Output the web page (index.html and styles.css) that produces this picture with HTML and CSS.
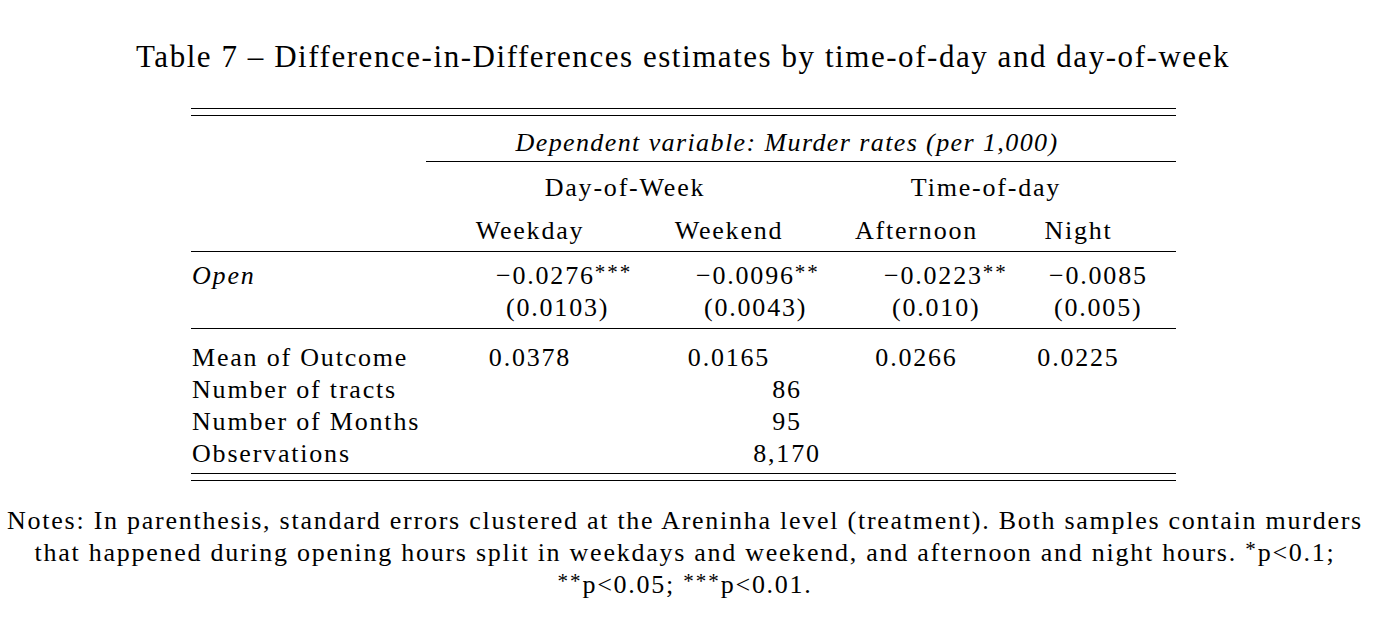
FILE: index.html
```html
<!DOCTYPE html>
<html>
<head>
<meta charset="utf-8">
<title>Table 7</title>
<link rel="stylesheet" href="styles.css">
</head>
<body>
<h1 class="title">Table 7 – Difference-in-Differences estimates by time-of-day and day-of-week</h1>
<div class="tbl">
  <div class="double-rule"></div>
  <div class="row dep-row">
    <div class="dep-cell">Dependent variable: Murder rates (per 1,000)</div>
  </div>
  <div class="row group-row">
    <div class="group-a">Day-of-Week</div>
    <div class="group-b">Time-of-day</div>
  </div>
  <div class="row head-row">
    <div class="label"></div>
    <div class="cell">Weekday</div>
    <div class="cell">Weekend</div>
    <div class="cell">Afternoon</div>
    <div class="cell">Night</div>
  </div>
  <div class="row coef-row">
    <div class="label"><i>Open</i></div>
    <div class="cell">−0.0276<sup>***</sup></div>
    <div class="cell">−0.0096<sup>**</sup></div>
    <div class="cell">−0.0223<sup>**</sup></div>
    <div class="cell">−0.0085</div>
  </div>
  <div class="row se-row">
    <div class="label"></div>
    <div class="cell">(0.0103)</div>
    <div class="cell">(0.0043)</div>
    <div class="cell">(0.010)</div>
    <div class="cell">(0.005)</div>
  </div>
  <div class="row mean-row">
    <div class="label">Mean of Outcome</div>
    <div class="cell">0.0378</div>
    <div class="cell">0.0165</div>
    <div class="cell">0.0266</div>
    <div class="cell">0.0225</div>
  </div>
  <div class="row stat-row">
    <div class="label">Number of tracts</div>
    <div class="span4">86</div>
  </div>
  <div class="row stat-row">
    <div class="label">Number of Months</div>
    <div class="span4">95</div>
  </div>
  <div class="row stat-row last">
    <div class="label">Observations</div>
    <div class="span4">8,170</div>
  </div>
  <div class="double-rule"></div>
</div>
<p class="notes">Notes: In parenthesis, standard errors clustered at the Areninha level (treatment). Both samples contain murders<br>that happened during opening hours split in weekdays and weekend, and afternoon and night hours. <sup>*</sup>p&lt;0.1;<br><sup>**</sup>p&lt;0.05; <sup>***</sup>p&lt;0.01.</p>
</body>
</html>
```
FILE: styles.css
```css
html, body {
  margin: 0;
  padding: 0;
  background: #ffffff;
  color: #000000;
}

body {
  font-family: "Liberation Serif", "Times New Roman", serif;
  font-size: 26px;
  letter-spacing: 1.8px;
  width: 1378px;
}

.title {
  margin: 0;
  padding: 37px 12px 0 0;
  font-size: 31px;
  font-weight: normal;
  line-height: 40px;
  text-align: center;
  letter-spacing: 1.55px;
  white-space: nowrap;
}

.tbl {
  width: 985px;
  margin: 31px 0 0 191px;
}

.double-rule {
  height: 6px;
  border-top: 1px solid #000;
  border-bottom: 1px solid #000;
}

.row {
  display: grid;
  grid-template-columns: 235px 208px 190px 185px 139px 28px;
  line-height: 32px;
  white-space: nowrap;
}

.label {
  grid-column: 1;
  padding-left: 1px;
}

.dep-row {
  padding-top: 9px;
}

.dep-cell {
  grid-column: 2 / 7;
  padding-right: 28px;
  line-height: 36px;
  text-align: center;
  font-style: italic;
  letter-spacing: 1.4px;
  border-bottom: 1px solid #000;
}

.group-row {
  padding-top: 4px;
  line-height: 44px;
}

.group-a {
  grid-column: 2 / 4;
  text-align: center;
}

.group-b {
  grid-column: 4 / 6;
  text-align: center;
}

.head-row {
  line-height: 41px;
  border-bottom: 1px solid #000;
}

.head-row .cell,
.mean-row .cell {
  text-align: center;
}

.coef-row {
  padding-top: 8px;
}

.coef-row .cell:nth-child(2) { padding-left: 70px; }
.coef-row .cell:nth-child(3) { padding-left: 62px; }
.coef-row .cell:nth-child(4) { padding-left: 60px; }
.coef-row .cell:nth-child(5) { padding-left: 40px; }

.se-row {
  padding-bottom: 4px;
  border-bottom: 1px solid #000;
}

.se-row .cell:nth-child(2) { padding-left: 80px; }
.se-row .cell:nth-child(3) { padding-left: 70px; }
.se-row .cell:nth-child(4) { padding-left: 68px; }
.se-row .cell:nth-child(5) { padding-left: 45px; }

.mean-row {
  padding-top: 13px;
}

.span4 {
  grid-column: 2 / 6;
  text-align: center;
}

.stat-row.last {
  padding-bottom: 3px;
}

sup {
  font-size: 21px;
  line-height: 0;
  vertical-align: 5px;
  letter-spacing: 2px;
}

.notes {
  margin: 24px 0 0 0;
  padding-right: 8px;
  line-height: 32px;
  text-align: center;
  letter-spacing: 1.74px;
  white-space: nowrap;
}
```
